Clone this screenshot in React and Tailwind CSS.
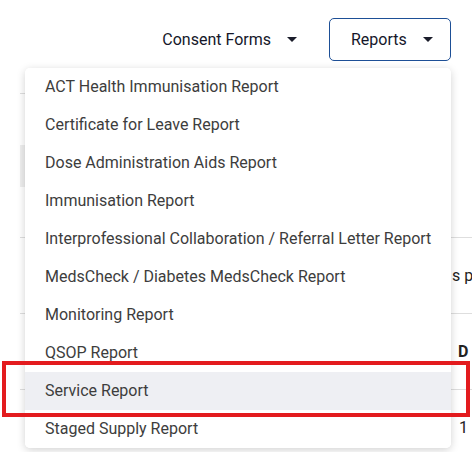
import { useState } from 'react'

const REPORTS = [
  'ACT Health Immunisation Report',
  'Certificate for Leave Report',
  'Dose Administration Aids Report',
  'Immunisation Report',
  'Interprofessional Collaboration / Referral Letter Report',
  'MedsCheck / Diabetes MedsCheck Report',
  'Monitoring Report',
  'QSOP Report',
  'Service Report',
  'Staged Supply Report',
]

function Caret() {
  return (
    <svg width="10" height="5" viewBox="0 0 10 5" className="shrink-0">
      <path d="M0 0h10L5 5z" fill="#1b1d2b" />
    </svg>
  )
}

export default function App() {
  const [hovered, setHovered] = useState('Service Report')

  return (
    <div className="relative w-[472px] h-[452px] overflow-hidden bg-white font-['Roboto','Liberation_Sans',sans-serif]">
      {/* top actions */}
      <header className="flex justify-end items-center gap-4 pt-[18px] pr-[21px]">
        <button className="h-[43px] flex items-center gap-4 px-4 text-[16px] font-normal text-[#15172a]">
          Consent Forms
          <Caret />
        </button>
        <button className="h-[43px] w-[122px] flex items-center gap-4 pl-[21px] pr-[19px] border border-[#1d4f96] rounded-[5px] text-[16px] font-normal text-[#15172a]">
          Reports
          <Caret />
        </button>
      </header>

      {/* page behind the menu */}
      <div className="ml-[20px] flex flex-col text-[16px] text-[#222]">
        <div className="mt-[32px] w-[410px] border-t border-[#dedede]" />
        <div className="mt-[51px] w-[410px] h-[42px] bg-[#eeeeee]" />
        <div className="mt-[50px] border-t border-[#dedede]" />
        <div className="h-[75px] flex items-center">
          <div className="w-[432px] shrink-0" />
          <span className="whitespace-nowrap">s p</span>
        </div>
        <div className="border-t border-[#dedede]" />
        <div className="h-[75px] flex items-center">
          <div className="w-[438px] shrink-0" />
          <span className="font-bold">D</span>
        </div>
        <div className="border-t border-[#dedede]" />
        <div className="h-[75px] flex items-center">
          <div className="w-[439px] shrink-0" />
          <span>1</span>
        </div>
      </div>

      {/* reports dropdown */}
      <ul className="absolute left-[25px] top-[68px] w-[426px] bg-white rounded-[5px] shadow-[0_2px_8px_rgba(0,0,0,0.18)] overflow-hidden">
        {REPORTS.map(r => (
          <li
            key={r}
            onMouseEnter={() => setHovered(r)}
            className={`h-[38px] flex items-center pl-5 text-[16px] text-[#3d3d3d] whitespace-nowrap ${
              hovered === r ? 'bg-[#eeeff3]' : 'bg-white'
            }`}
          >
            {r}
          </li>
        ))}
      </ul>

      {/* annotation */}
      <div className="absolute left-[2px] top-[361px] w-[468px] h-[56px] border-[4px] border-[#e31b1e] pointer-events-none" />
    </div>
  )
}
